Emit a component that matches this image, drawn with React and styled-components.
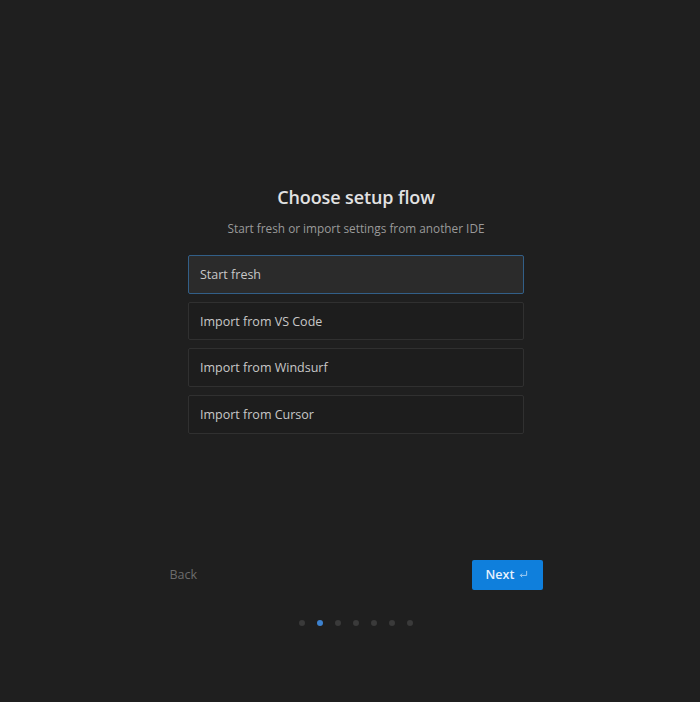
import React, { useState } from "react";
import styled, { createGlobalStyle } from "styled-components";

const Global = createGlobalStyle`
  html, body { margin: 0; padding: 0; background: #1f1f1f; }
  body { font-family: "Open Sans", "Noto Sans", sans-serif; }
  * { box-sizing: border-box; }
`;

const Page = styled.div`
  min-height: 702px;
  display: flex;
  flex-direction: column;
  align-items: center;
  padding: 185px 0 0 12px;
  background: #1f1f1f;
`;

const Title = styled.h1`
  margin: 0;
  font-size: 18px;
  line-height: 24px;
  font-weight: 600;
  color: #e2e2e2;
  letter-spacing: -0.1px;
`;

const Subtitle = styled.p`
  margin: 11px 0 0;
  font-size: 11.8px;
  line-height: 16px;
  color: #9a9a9a;
`;

const OptionList = styled.div`
  margin-top: 19px;
  width: 336px;
  display: flex;
  flex-direction: column;
  gap: 8px;
`;

const Option = styled.button`
  height: 38.7px;
  display: flex;
  align-items: center;
  padding: 0 11px;
  border-radius: 2px;
  border: 1px solid ${(p) => (p.$selected ? "#325f88" : "#303030")};
  background: ${(p) => (p.$selected ? "#2b2b2b" : "#1d1d1d")};
  color: #c8c8c8;
  font-family: inherit;
  font-size: 12.5px;
  text-align: left;
  cursor: pointer;
`;

const Footer = styled.div`
  margin-top: 126px;
  width: 373px;
  display: flex;
  align-items: center;
  justify-content: space-between;
`;

const BackButton = styled.button`
  background: none;
  border: none;
  padding: 0;
  color: #6c6c6c;
  font-family: inherit;
  font-size: 12.5px;
  cursor: pointer;
`;

const NextButton = styled.button`
  width: 71px;
  height: 30px;
  display: flex;
  align-items: center;
  justify-content: center;
  gap: 5px;
  border: none;
  border-radius: 2px;
  background: #0f7fdc;
  color: #e6f1fc;
  font-family: inherit;
  font-size: 12.5px;
  font-weight: 600;
  cursor: pointer;
`;

const EnterIcon = styled.svg`
  width: 9px;
  height: 9px;
  opacity: 0.75;
`;

const Dots = styled.div`
  margin-top: 30px;
  display: flex;
  gap: 11.5px;
`;

const Dot = styled.span`
  width: 6.5px;
  height: 6.5px;
  border-radius: 50%;
  background: ${(p) => (p.$active ? "#3d82cf" : "#3a3a3a")};
`;

const options = ["Start fresh", "Import from VS Code", "Import from Windsurf", "Import from Cursor"];

export default function App() {
  const [selected, setSelected] = useState(0);
  return (
    <>
      <Global />
      <Page>
        <Title>Choose setup flow</Title>
        <Subtitle>Start fresh or import settings from another IDE</Subtitle>
        <OptionList>
          {options.map((o, i) => (
            <Option key={o} $selected={i === selected} onClick={() => setSelected(i)}>
              {o}
            </Option>
          ))}
        </OptionList>
        <Footer>
          <BackButton>Back</BackButton>
          <NextButton>
            Next
            <EnterIcon viewBox="0 0 10 10" fill="none" stroke="currentColor" strokeWidth="1">
              <path d="M8.5 1v5H1.5" />
              <path d="M3.5 4L1.5 6l2 2" />
            </EnterIcon>
          </NextButton>
        </Footer>
        <Dots>
          {Array.from({ length: 7 }).map((_, i) => (
            <Dot key={i} $active={i === 1} />
          ))}
        </Dots>
      </Page>
    </>
  );
}
